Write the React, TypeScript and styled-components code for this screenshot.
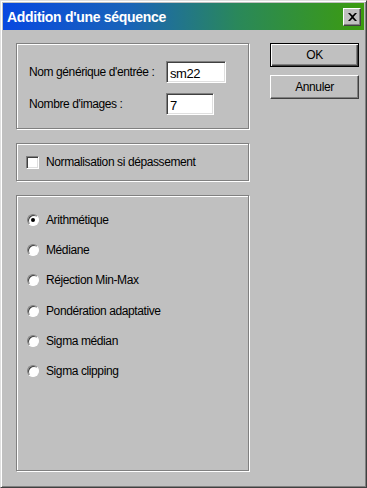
import React from "react";
import styled, { createGlobalStyle } from "styled-components";

const Global = createGlobalStyle`
  html, body {
    margin: 0;
    padding: 0;
    background: #c0c0c0;
  }
  body {
    font-family: "Liberation Sans", Arial, sans-serif;
    font-size: 12px;
    letter-spacing: -0.4px;
    color: #000;
  }
`;

const methods = [
  "Arithmétique",
  "Médiane",
  "Réjection Min-Max",
  "Pondération adaptative",
  "Sigma médian",
  "Sigma clipping",
];

const App = () => {
  return (
    <>
      <Global />
      <Window>
        <TitleBar>
          <Title>Addition d'une séquence</Title>
          <CloseBtn>
            <svg width="9" height="8" viewBox="0 0 9 8">
              <path
                d="M0 0h2l2.5 2.5L7 0h2L5.5 4 9 8H7L4.5 5.5 2 8H0l3.5-4z"
                fill="#000"
              />
            </svg>
          </CloseBtn>
        </TitleBar>
        <Body>
          <Left>
            <Group h={86}>
              <FieldRow top={17}>
                <Label>Nom générique d'entrée :</Label>
                <Input w={60}>sm22</Input>
              </FieldRow>
              <FieldRow top={10}>
                <Label>Nombre d'images :</Label>
                <Input w={48}>7</Input>
              </FieldRow>
            </Group>
            <Group h={38}>
              <CheckRow>
                <Check />
                <span>Normalisation si dépassement</span>
              </CheckRow>
            </Group>
            <Group h={276}>
              <RadioList>
                {methods.map((m, i) => (
                  <RadioRow key={m}>
                    <Radio>{i === 0 && <Dot />}</Radio>
                    <span>{m}</span>
                  </RadioRow>
                ))}
              </RadioList>
            </Group>
          </Left>
          <Right>
            <Button primary>OK</Button>
            <Button>Annuler</Button>
          </Right>
        </Body>
      </Window>
    </>
  );
};
export default App;

const Window = styled.div`
  width: 367px;
  height: 488px;
  box-sizing: border-box;
  background: #c0c0c0;
  border: 1px solid;
  border-color: #dfdfdf #404040 #404040 #dfdfdf;
  box-shadow: inset 1px 1px #fff, inset -1px -1px #808080;
  padding: 2px;
  display: flex;
  flex-direction: column;
`;

const TitleBar = styled.div`
  height: 27px;
  display: flex;
  align-items: center;
  justify-content: space-between;
  padding: 0 3px 0 4px;
  background: linear-gradient(90deg, #0848e0 0%, #1a64b8 35%, #2a885a 65%, #3c9c0e 100%);
`;

const Title = styled.span`
  color: #fff;
  font-weight: bold;
  font-size: 14px;
  letter-spacing: -0.3px;
`;

const CloseBtn = styled.div`
  width: 18px;
  height: 18px;
  box-sizing: border-box;
  background: #c0c0c0;
  border: 1px solid;
  border-color: #fff #404040 #404040 #fff;
  box-shadow: inset -1px -1px #808080;
  display: flex;
  align-items: center;
  justify-content: center;
`;

const Body = styled.div`
  flex: 1;
  display: flex;
  padding: 13px 5px 0 13px;
  gap: 21px;
`;

const Left = styled.div`
  width: 233px;
  display: flex;
  flex-direction: column;
  gap: 14px;
`;

const Group = styled.div<{ h: number }>`
  height: ${(p) => p.h}px;
  box-sizing: border-box;
  border: 1px solid #808080;
  box-shadow: inset 1px 1px #fff, 1px 1px #fff;
`;

const FieldRow = styled.div<{ top: number }>`
  display: flex;
  align-items: center;
  margin-top: ${(p) => p.top}px;
  padding-left: 12px;
`;

const Label = styled.span`
  width: 137px;
  white-space: nowrap;
`;

const Input = styled.div<{ w: number }>`
  width: ${(p) => p.w}px;
  height: 22px;
  box-sizing: border-box;
  background: #fff;
  border: 1px solid;
  border-color: #808080 #fff #fff #808080;
  box-shadow: inset 1px 1px #404040, inset -1px -1px #dfdfdf;
  padding: 4px 0 0 3px;
  font-size: 13px;
`;

const CheckRow = styled.div`
  display: flex;
  align-items: center;
  gap: 7px;
  padding: 11px 0 0 9px;
`;

const Check = styled.div`
  width: 13px;
  height: 13px;
  box-sizing: border-box;
  background: #fff;
  border: 1px solid;
  border-color: #808080 #fff #fff #808080;
  box-shadow: inset 1px 1px #404040, inset -1px -1px #dfdfdf;
`;

const RadioList = styled.div`
  display: flex;
  flex-direction: column;
  gap: 15.4px;
  padding: 16px 0 0 10px;
`;

const RadioRow = styled.div`
  display: flex;
  align-items: center;
  gap: 7px;
  height: 15px;
`;

const Radio = styled.div`
  width: 12px;
  height: 12px;
  box-sizing: border-box;
  border-radius: 50%;
  background: #fff;
  border: 1px solid;
  border-color: #808080 #fff #fff #808080;
  box-shadow: inset 1px 1px #404040;
  display: flex;
  align-items: center;
  justify-content: center;
`;

const Dot = styled.div`
  width: 4px;
  height: 4px;
  border-radius: 50%;
  background: #000;
`;

const Right = styled.div`
  width: 89px;
  display: flex;
  flex-direction: column;
  gap: 8px;
`;

const Button = styled.div<{ primary?: boolean }>`
  height: 24px;
  box-sizing: border-box;
  display: flex;
  align-items: center;
  justify-content: center;
  background: #c0c0c0;
  border: 1px solid;
  border-color: ${(p) => (p.primary ? "#000" : "#fff #404040 #404040 #fff")};
  box-shadow: ${(p) =>
    p.primary
      ? "inset 1px 1px #fff, inset -1px -1px #404040, inset -2px -2px #808080"
      : "inset -1px -1px #808080"};
`;
